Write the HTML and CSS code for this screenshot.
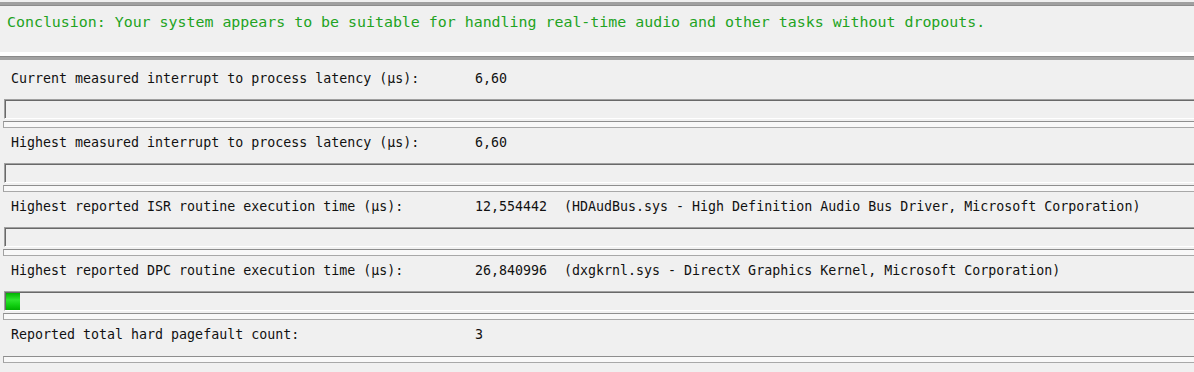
FILE: index.html
```html
<!DOCTYPE html>
<html lang="en">
<head>
  <meta charset="UTF-8">
  <title>Latency report</title>
  <link rel="stylesheet" href="styles.css">
</head>
<body>
  <div class="conclusion">
    Conclusion: Your system appears to be suitable for handling real-time audio and other tasks without dropouts.
  </div>
  <div class="divider"></div>

  <div class="row">
    <div class="line"><span class="name">Current measured interrupt to process latency (µs):</span><span class="value">6,60</span></div>
    <div class="meter"></div>
    <div class="sep"></div>
  </div>

  <div class="row">
    <div class="line"><span class="name">Highest measured interrupt to process latency (µs):</span><span class="value">6,60</span></div>
    <div class="meter"></div>
    <div class="sep"></div>
  </div>

  <div class="row">
    <div class="line"><span class="name">Highest reported ISR routine execution time (µs):</span><span class="value">12,554442</span><span class="driver">(HDAudBus.sys - High Definition Audio Bus Driver, Microsoft Corporation)</span></div>
    <div class="meter"></div>
    <div class="sep"></div>
  </div>

  <div class="row">
    <div class="line"><span class="name">Highest reported DPC routine execution time (µs):</span><span class="value">26,840996</span><span class="driver">(dxgkrnl.sys - DirectX Graphics Kernel, Microsoft Corporation)</span></div>
    <div class="meter"><div class="fill" style="width: 14px"></div></div>
    <div class="sep"></div>
  </div>

  <div class="row">
    <div class="line last"><span class="name">Reported total hard pagefault count:</span><span class="value">3</span></div>
    <div class="sep"></div>
  </div>
</body>
</html>
```

FILE: styles.css
```css
body {
  margin: 0;
  background: #f0f0f0;
  font-family: "DejaVu Sans Mono", "Liberation Mono", monospace;
  overflow: hidden;
}

.conclusion {
  margin-top: 2px;
  height: 54px;
  padding: 8px 0 0 7px;
  box-sizing: border-box;
  border-top: 3px solid #a0a0a0;
  border-bottom: 4px solid #fff;
  box-shadow: inset 0 1px 0 #8c8c8c;
  color: #22a322;
  font-size: 14.92px;
  line-height: 18px;
  white-space: nowrap;
}

.divider {
  height: 3px;
  margin-bottom: 4px;
  border-top: 1px solid #8a8a8a;
  background: #a2a2a2;
}

.line {
  display: flex;
  padding: 7px 0 12px 11px;
  font-size: 13.3px;
  line-height: 16px;
  color: #111;
  white-space: nowrap;
}

.line.last {
  padding-bottom: 11px;
}

.name {
  width: 464px;
  flex: none;
}

.value {
  width: 89px;
  flex: none;
}

.meter {
  margin-left: 4px;
  height: 17px;
  border-top: 1px solid #a0a0a0;
  border-left: 1px solid #a0a0a0;
  border-bottom: 1px solid #fff;
  box-shadow: inset 1px 1px 0 #696969;
  padding: 1px 0 0 1px;
}

.fill {
  height: 17px;
  background: linear-gradient(#00b400, #2ee42e 40%, #12d012 70%, #00b000);
}

.sep {
  margin: 2px 0 0 3px;
  height: 5px;
  border-top: 1px solid #8e8e8e;
  border-left: 1px solid #a0a0a0;
  border-bottom: 1px solid #a8a8a8;
  background: #f8f8f8;
}
```
